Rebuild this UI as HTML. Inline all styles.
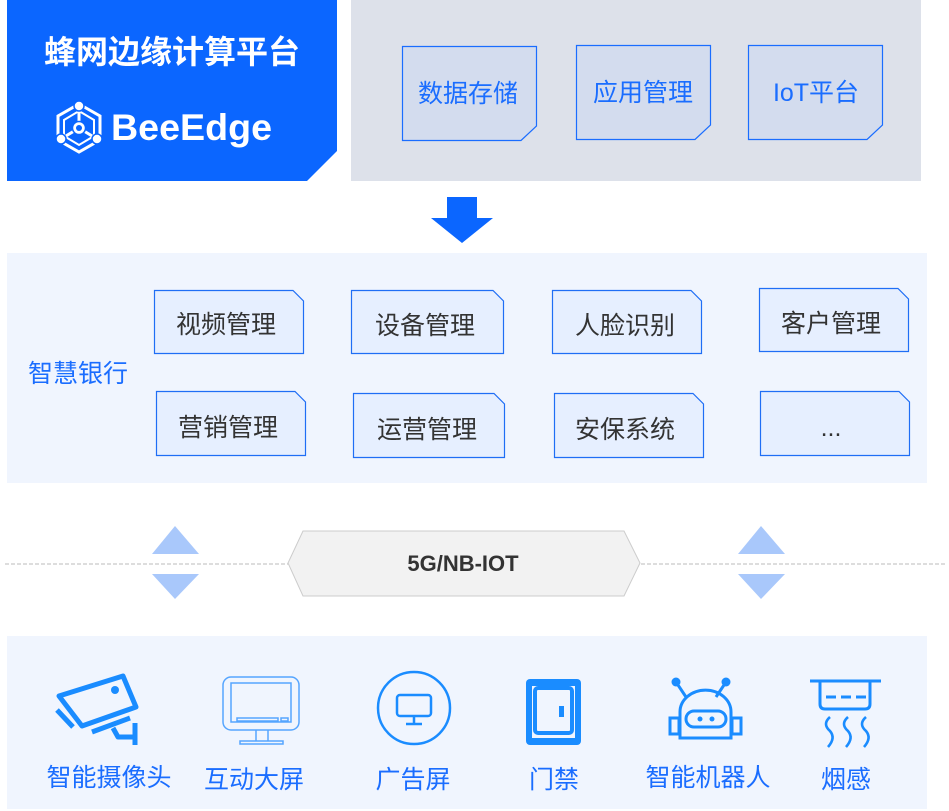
<!DOCTYPE html>
<html><head><meta charset="utf-8"><style>
html,body{margin:0;padding:0;background:#fff;}
svg{display:block;}
text{font-family:"Liberation Sans","Noto Sans CJK SC",sans-serif;}
</style></head><body>
<svg width="949" height="811" viewBox="0 0 949 811" xmlns="http://www.w3.org/2000/svg">
<path d="M7 0H337V151L307 181H7Z" fill="#0b66ff"/>
<text x="172" y="63" font-size="32" font-weight="bold" fill="#fff" text-anchor="middle" style="font-family:'Noto Sans CJK SC',sans-serif">蜂网边缘计算平台</text>
<g fill="none" stroke="#fff" stroke-width="3">
<path d="M79 104L100 116V140L79 152L58 140V116Z"/>
<path d="M79 111L94 120V136L79 145L64 136V120Z" stroke-width="2"/>
<path d="M79 106V128M79 128L61 139M79 128L97 139"/>
</g>
<g fill="#fff" stroke="#0b66ff" stroke-width="1.5">
<circle cx="79" cy="106" r="5"/><circle cx="61" cy="139" r="5"/><circle cx="97" cy="139" r="5"/><circle cx="79" cy="128" r="6.5"/>
</g>
<circle cx="79" cy="128" r="3" fill="#0b66ff"/>
<text x="111" y="140" font-size="37" font-weight="bold" fill="#fff" textLength="161" lengthAdjust="spacingAndGlyphs">BeeEdge</text>

<rect x="351" y="0" width="570" height="181" fill="#dde1ea"/>
<g fill="#d3dcee" stroke="#1a6dff" stroke-width="1.2">
<path d="M402.5 46.5H536.5V126L521 140.5H402.5Z"/>
<path d="M576.5 45.5H710.5V125L695 139.5H576.5Z"/>
<path d="M748.5 45.5H882.5V125L867 139.5H748.5Z"/>
</g>
<g font-size="25" fill="#1a6dff" text-anchor="middle">
<text x="468" y="102">数据存储</text>
<text x="643" y="101">应用管理</text>
<text x="816" y="101">IoT平台</text>
</g>

<path d="M447 197H477V218H493L462 243L431 218H447Z" fill="#0b66ff"/>

<rect x="7" y="253" width="920" height="230" fill="#f0f5fe"/>
<text x="78" y="382" font-size="25" fill="#1a6dff" text-anchor="middle">智慧银行</text>
<g fill="#e6efff" stroke="#1f6ef5" stroke-width="1.2">
<path d="M154.5 290.5H293L303.5 301V353.5H154.5Z"/>
<path d="M351.5 290.5H493L503.5 301V353.5H351.5Z"/>
<path d="M552.5 290.5H691L701.5 301V353.5H552.5Z"/>
<path d="M759.5 288.5H898L908.5 299V351.5H759.5Z"/>
<path d="M156.5 391.5H295L305.5 402V455.5H156.5Z"/>
<path d="M353.5 393.5H494L504.5 404V457.5H353.5Z"/>
<path d="M554.5 393.5H693L703.5 404V457.5H554.5Z"/>
<path d="M760.5 391.5H899L909.5 402V455.5H760.5Z"/>
</g>
<g font-size="25" fill="#333" text-anchor="middle">
<text x="226" y="333">视频管理</text>
<text x="425" y="334">设备管理</text>
<text x="625" y="334">人脸识别</text>
<text x="831" y="332">客户管理</text>
<text x="228" y="436">营销管理</text>
<text x="427" y="438">运营管理</text>
<text x="625" y="438">安保系统</text>
<text x="831" y="436">...</text>
</g>

<line x1="5" y1="564" x2="945" y2="564" stroke="#bbb" stroke-width="1" stroke-dasharray="4,2"/>
<path d="M303 531H624L640 563L624 596H303L288 563Z" fill="#f2f2f2" stroke="#ccc" stroke-width="1"/>
<text x="463" y="571" font-size="22" font-weight="bold" fill="#333" text-anchor="middle">5G/NB-IOT</text>
<g fill="#a9c8fb">
<path d="M175 526L199 554H152Z"/><path d="M152 574H199L175 599Z"/>
<path d="M761 526L785 554H738Z"/><path d="M738 574H785L761 599Z"/>
</g>

<rect x="7" y="636" width="920" height="173" fill="#f0f5fe"/>
<g fill="none" stroke="#1a8cff" stroke-width="5" stroke-linejoin="round">
<path d="M59 696L123 676L136 707L82 726Z"/>
<path d="M57 710L73 727"/>
<path d="M92 732L130 718"/>
<path d="M113 728L118 737H134M135 723V745"/>
</g>
<circle cx="115" cy="690" r="4" fill="#1a8cff"/>
<g fill="none" stroke="#55a5ff" stroke-width="1.5">
<rect x="223" y="677" width="76" height="53" rx="8"/>
<rect x="231" y="683" width="60" height="39"/>
<rect x="237" y="718" width="41" height="3"/>
<rect x="281" y="718" width="7" height="3"/>
<path d="M256 730V741M268 730V741"/>
<rect x="240" y="741" width="43" height="3"/>
</g>
<g fill="none" stroke="#1a8cff" stroke-width="2.5">
<circle cx="414" cy="708" r="36"/>
<rect x="397" y="695" width="34" height="21" rx="3"/>
<path d="M414 716V724M406 724H422"/>
</g>
<rect x="526" y="679" width="55" height="66" rx="4" fill="#1a8cff"/>
<rect x="532" y="686" width="43" height="52" fill="#f0f5fe"/>
<rect x="535" y="688" width="37" height="45" rx="3" fill="none" stroke="#1a8cff" stroke-width="4"/>
<rect x="559" y="706" width="5" height="11" fill="#1a8cff"/>
<g fill="none" stroke="#1a8cff" stroke-width="3">
<path d="M676 682L686 697M726 682L716 697"/>
<path d="M680 738V712A21 18 0 0 1 731 712V738Z"/>
<rect x="686" y="711" width="40" height="16" rx="8"/>
<rect x="670" y="718" width="9" height="16"/><rect x="732" y="718" width="9" height="16"/>
</g>
<circle cx="676" cy="682" r="4.5" fill="#1a8cff"/><circle cx="726" cy="682" r="4.5" fill="#1a8cff"/>
<circle cx="700" cy="719" r="2.5" fill="#1a8cff"/><circle cx="712" cy="719" r="2.5" fill="#1a8cff"/>
<g fill="none" stroke="#1a8cff" stroke-width="3">
<path d="M810 681H881"/>
<path d="M820 681V704Q820 709 825 709H865Q870 709 870 704V681"/>
<path d="M826 697H836M841 697H851M856 697H866" />
<path d="M830 717Q822 724 830 731Q836 738 828 747M848 717Q840 724 848 731Q854 738 846 747M866 717Q858 724 866 731Q872 738 864 747" stroke-width="2.6"/>
</g>
<g font-size="25" fill="#1a6dff" text-anchor="middle">
<text x="109" y="786">智能摄像头</text>
<text x="254" y="788">互动大屏</text>
<text x="413" y="788">广告屏</text>
<text x="554" y="788">门禁</text>
<text x="708" y="786">智能机器人</text>
<text x="846" y="788">烟感</text>
</g>
</svg>
</body></html>
